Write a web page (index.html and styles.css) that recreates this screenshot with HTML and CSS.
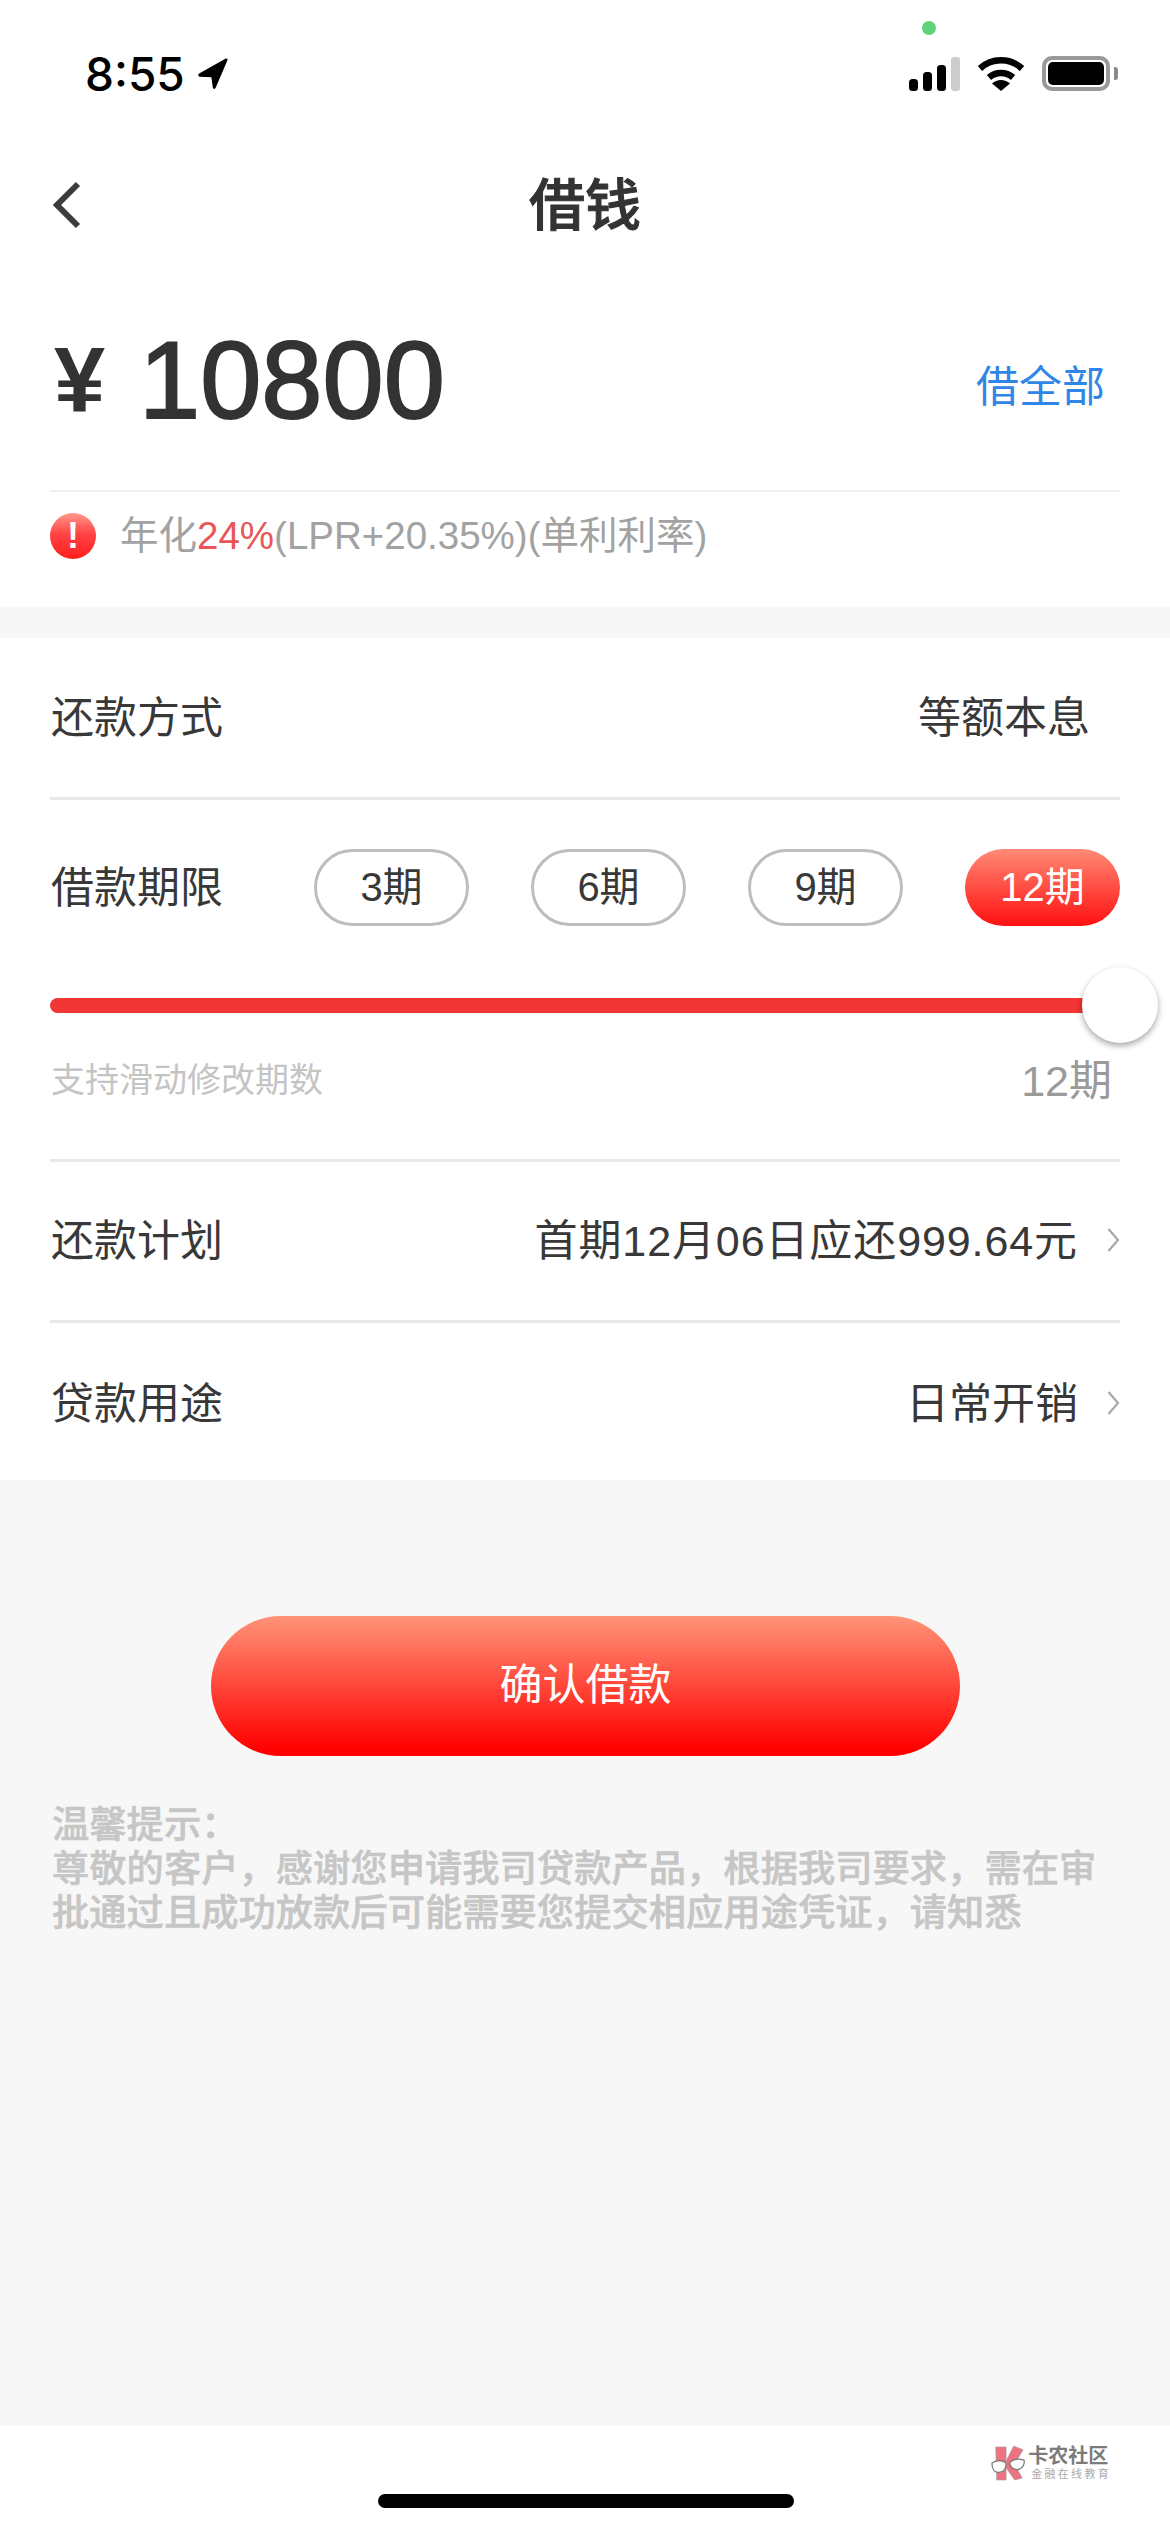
FILE: index.html
```html
<!DOCTYPE html>
<html lang="zh-CN">
<head>
  <meta charset="UTF-8" />
  <meta name="viewport" content="width=device-width, initial-scale=1.0"/>
  <title>借钱</title>
  <link rel="stylesheet" href="styles.css">
</head>
<body>
  <div class="page">
    <div class="status-bar">
      <div class="status-time">
        <span>8:55</span>
        <svg class="loc-icon" viewBox="0 0 30 31"><path d="M2 15.500 27 1.500c1-.5 2 .5 1.600 1.500L17.500 29c-.6 1.500-2.500 1.300-2.700-.3L13.500 19 2.500 18.500c-1.500-.1-1.800-2.200-.5-3z" fill="#000"/></svg>
      </div>
      <div class="status-icons">
        <svg class="signal-icon" viewBox="0 0 51 34">
          <rect x="0" y="22" width="9" height="12" rx="3.500" fill="#000"/>
          <rect x="14" y="15" width="9" height="19" rx="3.500" fill="#000"/>
          <rect x="28" y="8" width="9" height="26" rx="3.500" fill="#000"/>
          <rect x="42" y="0" width="9" height="34" rx="3" fill="#ccc"/>
        </svg>
        <svg class="wifi-icon" viewBox="0 0 48 36">
          <path d="M3 13.500a31 31 0 0 1 42 0" fill="none" stroke="#000" stroke-width="6.500"/>
          <path d="M12 22.500a18 18 0 0 1 24 0" fill="none" stroke="#000" stroke-width="6.500"/>
          <path d="M24 36 15 28.500a13 13 0 0 1 18 0z" fill="#000"/>
        </svg>
        <div class="battery">
          <div class="battery-level"></div>
          <div class="battery-tip"></div>
        </div>
      </div>
      <div class="green-dot"></div>
    </div>

    <div class="nav">
      <svg class="back-icon" viewBox="0 0 30 48"><path d="M26 3 5 24l21 21" fill="none" stroke="#3c3c3c" stroke-width="6"/></svg>
      <div class="nav-title">借钱</div>
    </div>

    <div class="top-card">
      <div class="amount-row">
        <div class="amount"><span class="yen">¥</span><span class="amount-num">10800</span></div>
        <div class="borrow-all">借全部</div>
      </div>
      <div class="rate-row">
        <div class="alert-icon">!</div>
        <div class="rate-text">年化<span class="rate-red">24%</span>(LPR+20.35%)(单利利率)</div>
      </div>
    </div>

    <div class="form-card">
      <div class="row row-first">
        <div class="row-label">还款方式</div>
        <div class="row-value row-value-plain">等额本息</div>
      </div>

      <div class="term">
        <div class="term-top">
          <div class="row-label">借款期限</div>
          <div class="pills">
            <div class="pill">3期</div>
            <div class="pill">6期</div>
            <div class="pill">9期</div>
            <div class="pill pill-active">12期</div>
          </div>
        </div>
        <div class="slider">
          <div class="slider-knob"></div>
        </div>
        <div class="slider-info">
          <div class="slider-hint">支持滑动修改期数</div>
          <div class="slider-value">12期</div>
        </div>
      </div>

      <div class="row">
        <div class="row-label">还款计划</div>
        <div class="row-right">
          <div class="row-value row-value-wide">首期12月06日应还999.64元</div>
          <svg class="chevron" viewBox="0 0 13 26"><path d="M1.500 2 11 13 1.500 24" fill="none" stroke="#a8a8a8" stroke-width="2.200"/></svg>
        </div>
      </div>

      <div class="row row-last">
        <div class="row-label">贷款用途</div>
        <div class="row-right">
          <div class="row-value">日常开销</div>
          <svg class="chevron" viewBox="0 0 13 26"><path d="M1.500 2 11 13 1.500 24" fill="none" stroke="#a8a8a8" stroke-width="2.200"/></svg>
        </div>
      </div>
    </div>

    <div class="main">
      <div class="confirm-btn">确认借款</div>
      <p class="tips">温馨提示&#xFF1A;<br>尊敬的客户&#xFF0C;感谢您申请我司贷款产品&#xFF0C;根据我司要求&#xFF0C;需在审批通过且成功放款后可能需要您提交相应用途凭证&#xFF0C;请知悉</p>
    </div>

    <div class="footer">
      <div class="logo">
        <svg class="logo-icon" viewBox="0 0 36 36">
          <path d="M5 1h11v15l8-16 10 4-9 15 8 15-8 2-9-13v13H6z" fill="#ee7380" stroke="#9a9a9a" stroke-width=".6"/>
          <path d="M1 18c5-3 11-3 15 0 0 6-3 10-8 10-5 0-7-5-7-10z" fill="#fff" stroke="#777" stroke-width="1.300"/>
          <path d="M20 17c4-3 10-4 15-2 1 5-2 9-7 10-5 0-8-3-8-8z" fill="#fff" stroke="#777" stroke-width="1.300"/>
        </svg>
        <div class="logo-text">
          <div class="logo-name">卡农社区</div>
          <div class="logo-sub">金融在线教育</div>
        </div>
      </div>
      <div class="home-indicator"></div>
    </div>
  </div>
</body>
</html>
```

FILE: styles.css
```css
* {
  box-sizing: border-box;
  margin: 0;
  padding: 0;
}

body {
  background-color: #f7f7f7;
  font-family: "Liberation Sans", "Noto Sans CJK SC", sans-serif;
  color: #333;
}

.page {
  width: 1170px;
  height: 2532px;
  display: flex;
  flex-direction: column;
  overflow: hidden;
}

/* status bar */
.status-bar {
  position: relative;
  height: 160px;
  padding: 55px 60px 0 85px;
  background: #fff;
  display: flex;
  justify-content: space-between;
  align-items: flex-start;
}

.status-time {
  display: flex;
  align-items: center;
  gap: 12px;
  font-family: Inter, sans-serif;
  font-size: 46px;
  font-weight: 500;
  line-height: 38px;
  color: #000;
}

.loc-icon {
  width: 32px;
  height: 33px;
  margin-top: -2px;
}

.status-icons {
  display: flex;
  align-items: center;
  gap: 17px;
}

.signal-icon {
  width: 51px;
  height: 34px;
  margin-top: 2px;
}

.wifi-icon {
  width: 48px;
  height: 36px;
}

.battery {
  position: relative;
  width: 68px;
  height: 35px;
  border: 4px solid #999;
  border-radius: 10px;
  padding: 2px;
}

.battery-level {
  width: 100%;
  height: 100%;
  background: #000;
  border-radius: 5px;
}

.battery-tip {
  position: absolute;
  right: -12px;
  top: 7px;
  width: 4px;
  height: 13px;
  background: #8a8a8a;
  border-radius: 0 3px 3px 0;
}

.green-dot {
  position: absolute;
  left: 922px;
  top: 21px;
  width: 14px;
  height: 14px;
  border-radius: 50%;
  background: #5dd27a;
}

/* nav */
.nav {
  position: relative;
  height: 90px;
  background: #fff;
  display: flex;
  align-items: center;
  justify-content: center;
}

.back-icon {
  position: absolute;
  left: 52px;
  top: 21px;
  width: 30px;
  height: 48px;
}

.nav-title {
  padding-bottom: 9px;
  font-size: 56px;
  font-weight: 500;
  color: #333;
  -webkit-text-stroke: 1px #333;
}

/* amount */
.top-card {
  height: 357px;
  padding: 0 50px;
  background: #fff;
}

.amount-row {
  height: 242px;
  padding-top: 20px;
  border-bottom: 2px solid #f0f0f0;
  display: flex;
  justify-content: space-between;
  align-items: center;
}

.amount {
  display: flex;
  align-items: center;
  color: #333;
}

.yen {
  width: 89px;
  padding-left: 4px;
  font-size: 92px;
  font-weight: 700;
  line-height: 110px;
}

.amount-num {
  font-size: 110px;
  line-height: 110px;
  -webkit-text-stroke: 2px #333;
}

.borrow-all {
  margin-top: 6px;
  padding-right: 15px;
  font-size: 43px;
  color: #2f86e6;
}

.rate-row {
  padding-top: 21px;
  display: flex;
  align-items: center;
  gap: 24px;
}

.alert-icon {
  width: 46px;
  height: 46px;
  border-radius: 50%;
  background: linear-gradient(#ff9a8c, #f44 45%, #ff1d1d);
  color: #fff;
  font-size: 36px;
  font-weight: 700;
  line-height: 46px;
  text-align: center;
}

.rate-text {
  font-size: 38.500px;
  color: #a2a2a2;
  line-height: 46px;
  white-space: nowrap;
}

.rate-red {
  color: #ea5656;
}

/* form */
.form-card {
  height: 842px;
  margin-top: 31px;
  padding: 0 50px;
  background: #fff;
}

.row {
  height: 161px;
  padding-bottom: 8px;
  display: flex;
  justify-content: space-between;
  align-items: center;
  border-bottom: 3px solid #e8e8e8;
}

.row-first {
  height: 162px;
}

.row-last {
  height: 156px;
  padding-bottom: 3px;
  border-bottom: none;
}

.row-label {
  padding-left: 1px;
  font-size: 43px;
  color: #383838;
  white-space: nowrap;
}

.row-right {
  display: flex;
  align-items: center;
  gap: 29px;
}

.row-value {
  font-size: 43px;
  color: #383838;
  white-space: nowrap;
}

.row-value-plain {
  padding-right: 30px;
}

.row-value-wide {
  letter-spacing: 0.900px;
}

.chevron {
  width: 13px;
  height: 26px;
  margin-top: 6px;
}

.term {
  height: 362px;
  padding-top: 49px;
  border-bottom: 3px solid #e8e8e8;
}

.term-top {
  display: flex;
  justify-content: space-between;
  align-items: center;
}

.term-top .row-label {
  margin-top: -8px;
}

.pills {
  display: flex;
  gap: 62px;
}

.pill {
  width: 155px;
  height: 77px;
  border: 3px solid #bdbdbd;
  border-radius: 39px;
  font-size: 40px;
  line-height: 71px;
  text-align: center;
  color: #383838;
}

.pill-active {
  border: none;
  line-height: 77px;
  color: #fff;
  background: linear-gradient(#ff8a75, #ff1010);
}

.slider {
  position: relative;
  height: 15px;
  margin-top: 72px;
  border-radius: 8px;
  background: #f23535;
}

.slider-knob {
  position: absolute;
  right: -38px;
  top: -31px;
  width: 76px;
  height: 76px;
  border-radius: 50%;
  background: #fff;
  box-shadow: 0 3px 6px rgba(0, 0, 0, 0.35);
}

.slider-info {
  height: 60px;
  margin-top: 34px;
  display: flex;
  justify-content: space-between;
  align-items: center;
}

.slider-hint {
  padding-left: 1px;
  font-size: 34px;
  color: #c4c4c4;
}

.slider-value {
  padding-right: 8px;
  font-size: 43px;
  color: #9a9a9a;
}

/* button and tips */
.main {
  flex: 1;
  padding: 136px 50px 0 52px;
}

.confirm-btn {
  width: 749px;
  height: 140px;
  margin-left: 159px;
  border-radius: 70px;
  background: linear-gradient(#ff9478, #ff0000 95%);
  color: #fff;
  font-size: 43px;
  line-height: 138px;
  text-align: center;
}

.tips {
  margin-top: 47px;
  font-size: 37.300px;
  line-height: 44px;
  font-weight: 500;
  color: #c6c6c6;
  -webkit-text-stroke: 0.5px #c6c6c6;
}

/* footer */
.footer {
  position: relative;
  height: 106px;
  padding: 19px 59px 0 0;
  background: #fff;
  display: flex;
  justify-content: flex-end;
  align-items: flex-start;
}

.logo {
  display: flex;
  align-items: center;
  gap: 3px;
}

.logo-icon {
  width: 34px;
  height: 36px;
}

.logo-name {
  font-size: 20px;
  line-height: 21px;
  font-weight: 700;
  color: #7b7b7b;
}

.logo-sub {
  padding-left: 3px;
  font-size: 11px;
  line-height: 14px;
  letter-spacing: 2.300px;
  color: #aaa;
  white-space: nowrap;
}

.home-indicator {
  position: absolute;
  left: 378px;
  bottom: 24px;
  width: 416px;
  height: 14px;
  border-radius: 7px;
  background: #000;
}
```
